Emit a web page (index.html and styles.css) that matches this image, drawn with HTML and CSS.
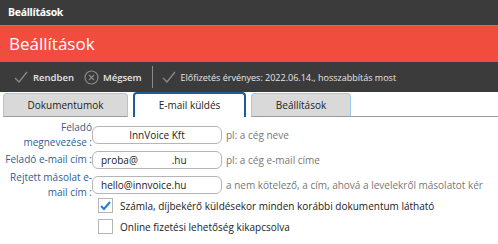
FILE: index.html
```html
<!DOCTYPE html>
<html lang="hu">
<head>
<meta charset="UTF-8">
<title>Beállítások</title>
<link rel="stylesheet" href="styles.css">
</head>
<body>

<div class="window-title">Beállítások</div>

<div class="page-header">Beállítások</div>

<!-- toolbar -->
<div class="toolbar">
    <span class="tool bold">
        <svg width="16" height="16" viewBox="0 0 16 16"><path d="M2 9 L6 13 L14 3" fill="none" stroke="#8a8a8a" stroke-width="1.3"/></svg>
        Rendben
    </span>
    <span class="tool bold">
        <svg width="15" height="15" viewBox="0 0 15 15"><circle cx="7.5" cy="7.5" r="6.5" fill="none" stroke="#8a8a8a" stroke-width="1.2"/><path d="M5 5 L10 10 M10 5 L5 10" stroke="#8a8a8a" stroke-width="1.2"/></svg>
        Mégsem
    </span>
    <span class="sep"></span>
    <span class="tool info">
        <svg width="16" height="16" viewBox="0 0 16 16"><path d="M2 9 L6 13 L14 3" fill="none" stroke="#8a8a8a" stroke-width="1.3"/></svg>
        Előfizetés érvényes: 2022.06.14., hosszabbítás most
    </span>
</div>

<!-- tabs -->
<div class="tabs">
    <div class="tab tab-docs">Dokumentumok</div>
    <div class="tab tab-mail active">E-mail küldés</div>
    <div class="tab tab-settings">Beállítások</div>
    <div class="tab-rest"></div>
</div>

<div class="form">
    <div class="row">
        <label class="lbl">Feladó megnevezése :</label>
        <input class="field center" type="text" value="InnVoice Kft">
        <span class="hint">pl: a cég neve</span>
    </div>
    <div class="row">
        <label class="lbl">Feladó e-mail cím :</label>
        <input class="field" type="text" value="proba@             .hu">
        <span class="hint">pl: a cég e-mail címe</span>
    </div>
    <div class="row">
        <label class="lbl">Rejtett másolat e-mail cím :</label>
        <input class="field" type="text" value="hello@innvoice.hu">
        <span class="hint">a nem kötelező, a cím, ahová a levelekről másolatot kér</span>
    </div>

    <div class="checks">
        <div class="check-row">
            <span class="box">
                <svg width="13" height="13" viewBox="0 0 13 13"><path d="M2 7 L5 10 L11 3" fill="none" stroke="#1e7fd8" stroke-width="2"/></svg>
            </span>
            Számla, díjbekérő küldésekor minden korábbi dokumentum látható
        </div>
        <div class="check-row">
            <span class="box"></span>
            Online fizetési lehetőség kikapcsolva
        </div>
    </div>
</div>

</body>
</html>
```

FILE: styles.css
```css
body {
    margin: 0;
    padding: 0;
    font-family: 'Open Sans', 'DejaVu Sans', sans-serif;
    font-size: 10px;
    background-color: #ffffff;
    color: #333;
}

.window-title {
    height: 25px;
    line-height: 25px;
    padding-left: 8px;
    background-color: #3b3b3b;
    border-bottom: 1px solid #8a8a8a;
    color: #ffffff;
    font-weight: bold;
    font-size: 10.5px;
    letter-spacing: -0.3px;
}

.page-header {
    height: 36px;
    line-height: 36px;
    padding-left: 9px;
    background-color: #f04d3f;
    color: #ffffff;
    font-size: 17px;
}

.toolbar {
    height: 30px;
    display: flex;
    align-items: center;
    padding-left: 13px;
    background-color: #3b3b3b;
    color: #e6e6e6;
    font-size: 9.5px;
}

.tool {
    display: flex;
    align-items: center;
    gap: 4px;
    margin-right: 10px;
}

.tool.bold {
    font-weight: 600;
}

.tool.info {
    font-size: 9px;
}

.sep {
    width: 1px;
    height: 22px;
    background-color: #8a8a8a;
    margin: 0 8px 0 0;
}

.tabs {
    display: flex;
    align-items: flex-end;
    height: 25px;
    padding-left: 3px;
}

.tab {
    box-sizing: border-box;
    height: 24px;
    line-height: 22px;
    text-align: center;
    background-color: #d9d9d9;
    border: 1px solid #9ec9ee;
    border-bottom: 1px solid #9a9a9a;
    border-radius: 4px 4px 0 0;
    color: #222;
    margin-right: 5px;
}

.tab-docs { width: 125px; }
.tab-mail { width: 113px; }
.tab-settings { width: 100px; margin-right: 0; }

.tab.active {
    height: 25px;
    background-color: #ffffff;
    border: 2px solid #1d5c99;
    border-bottom: none;
    line-height: 23px;
}

.tab-rest {
    flex: 1;
    border-bottom: 1px solid #9a9a9a;
}

.form {
    padding-top: 5px;
}

.row {
    display: flex;
    align-items: center;
    height: 25px;
}

.lbl {
    box-sizing: border-box;
    width: 92px;
    text-align: right;
    color: #2f5d96;
    line-height: 15px;
}

.field {
    box-sizing: border-box;
    width: 130px;
    height: 18px;
    margin: 0 4px 0 0;
    padding: 0 8px;
    border: 1px solid #b5b5b5;
    border-radius: 6px;
    font-family: 'Open Sans', 'DejaVu Sans', sans-serif;
    font-size: 10px;
    color: #222;
}

.field.center {
    text-align: center;
}

.hint {
    color: #777;
    font-size: 10px;
}

.checks {
    margin-top: -2px;
}

.check-row {
    display: flex;
    align-items: center;
    gap: 7px;
    height: 21px;
    padding-left: 98px;
    color: #222;
}

.box {
    box-sizing: border-box;
    width: 15px;
    height: 15px;
    border: 1px solid #b5b5b5;
    background-color: #fff;
    display: flex;
    align-items: center;
    justify-content: center;
}
```
